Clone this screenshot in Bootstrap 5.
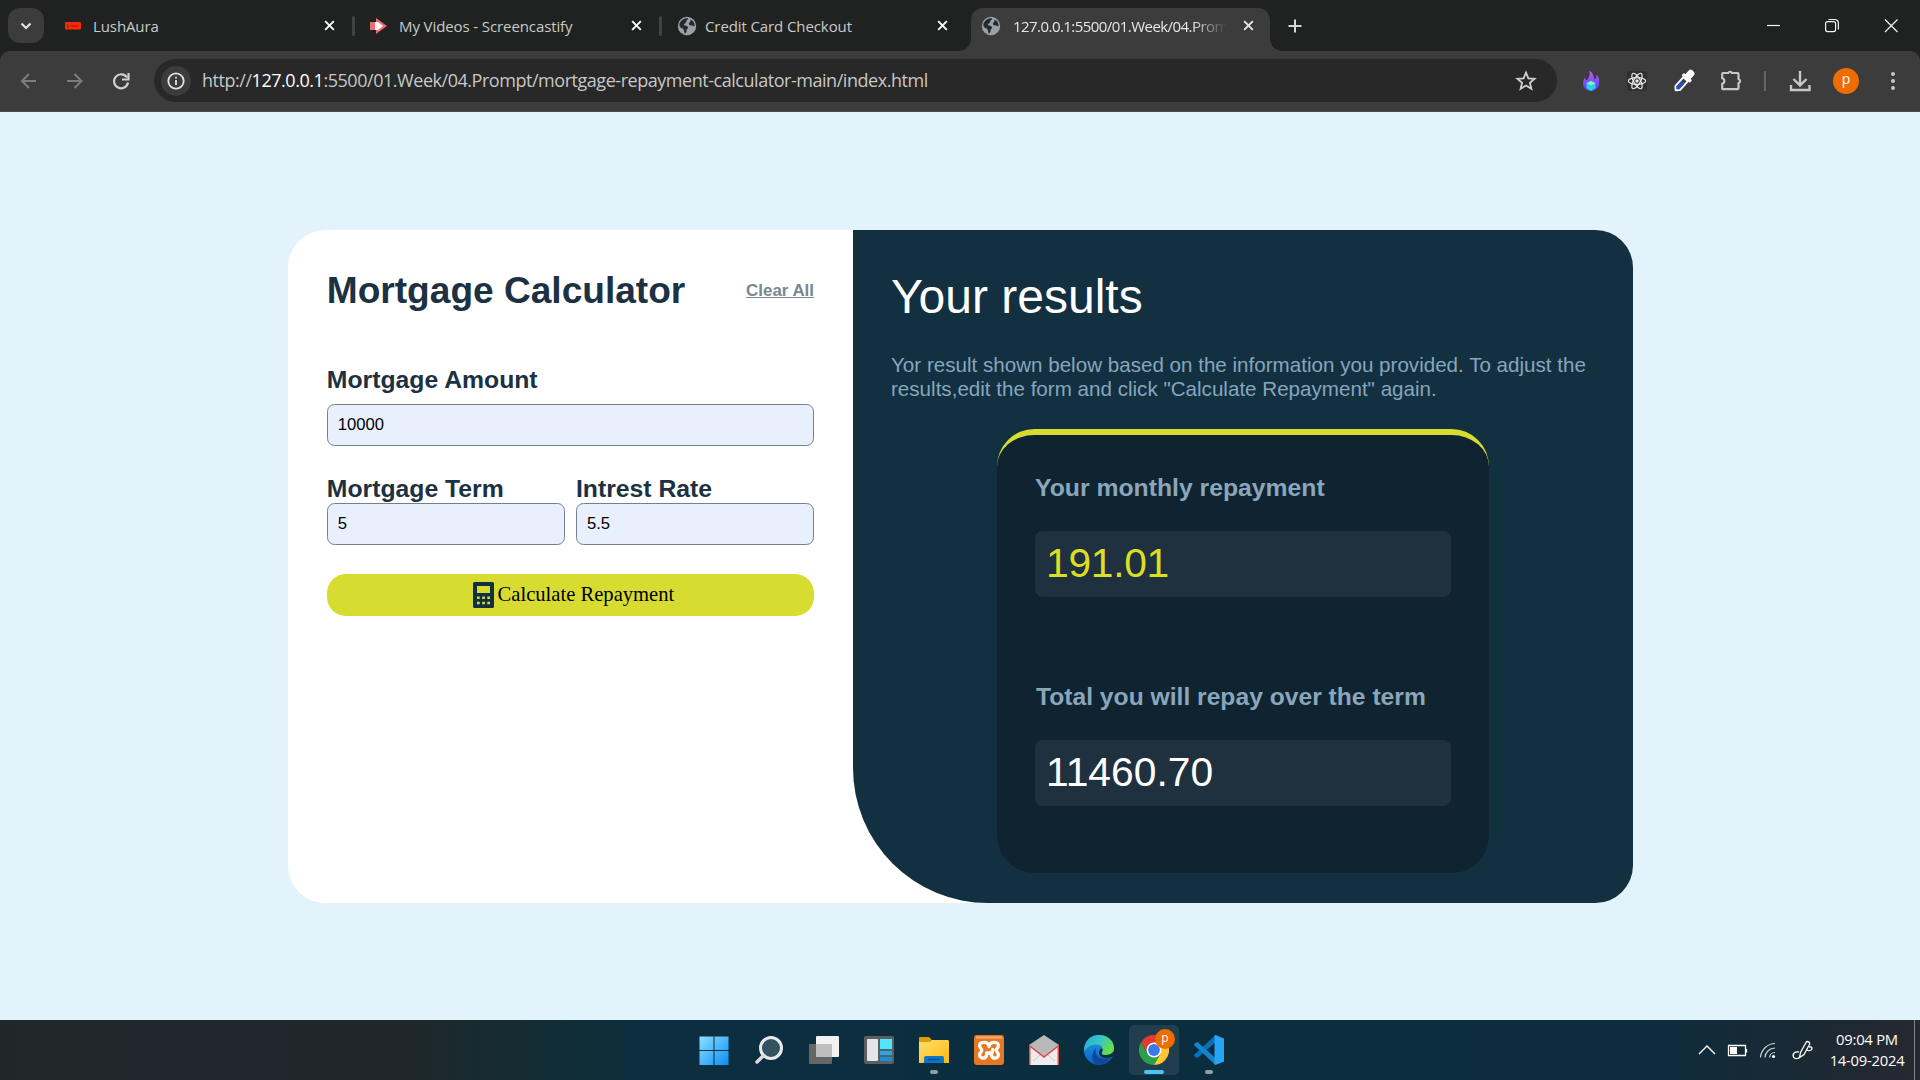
<!DOCTYPE html>
<html lang="en">
<head>
<meta charset="utf-8">
<title>Mortgage Calculator</title>
<link rel="stylesheet" href="https://cdn.jsdelivr.net/npm/bootstrap@5.3.0/dist/css/bootstrap.min.css">
<style>
  html, body { width: 1920px; height: 1080px; overflow: hidden; }
  body { font-family: "Liberation Sans", Arial, sans-serif; background: #e2f3fb; line-height: 1; }
  svg { display: block; flex: none; }
  .ui-font { font-family: "Open Sans", "Noto Sans", sans-serif; }

  /* tab strip */
  .tabstrip { height: 51px; background: #202221; color: #c9cac9; font-size: 15px; padding-left: 8px; }
  .tab-search { width: 36px; height: 35px; border-radius: 12px; background: #3c3c3c; }
  .tab-item { width: 304px; height: 35px; padding-left: 15px; }
  .tab-item.tab-last { width: 309px; }
  .tab-title { line-height: 24px; letter-spacing: -.1px; white-space: nowrap; }
  .tab-sep { width: 3px; height: 20px; border-radius: 2px; background: #414241; }
  .tab-live { width: 299px; height: 43px; margin-top: 8px; border-radius: 12px 12px 0 0; background: #3c3c3c; color: #e6e6e6; padding: 0 15px 8px 10px; position: relative; }
  .tab-live::before, .tab-live::after { content: ""; position: absolute; bottom: 0; width: 12px; height: 12px; }
  .tab-live::before { left: -12px; background: radial-gradient(circle at 0 0, transparent 11.5px, #3c3c3c 12px); }
  .tab-live::after { right: -12px; background: radial-gradient(circle at 100% 0, transparent 11.5px, #3c3c3c 12px); }
  .tab-fade { letter-spacing: -.55px; width: 218px; overflow: hidden; -webkit-mask-image: linear-gradient(90deg, #000 84%, transparent 100%); mask-image: linear-gradient(90deg, #000 84%, transparent 100%); }
  .tab-add { margin: 16px 0 0 15px; }
  .close-wide { margin-right: 22px; }

  /* address row */
  .toolbar-row { height: 61px; background: #3c3c3c; border-bottom: 1px solid #4a4a4a; padding: 0 16px 1px 16px; border-radius: 10px 10px 0 0; }
  .strip-under { background: #202221; }
  .omnibox { width: 1403px; height: 43px; border-radius: 22px; background: #282828; color: #c7c7c7; font-size: 18px; padding: 0 20px 0 7px; }
  .info-dot { width: 30px; height: 30px; background: #3c3c3c; }
  .url-text { letter-spacing: -.46px; margin-left: 11px; line-height: 26px; padding-bottom: 2px; white-space: nowrap; }
  .url-text span { color: #fff; }
  .avatar-dot { width: 26px; height: 26px; background: #ef6c00; color: #fff; font-size: 14px; }

  /* page */
  .stage { height: 908px; padding-top: 118px; }
  .calc { width: 1345px; height: 673px; border-radius: 37.5px; background: #fff; overflow: hidden; }
  .pane-form { width: 565px; padding: 39px 38.5px 0 39.3px; color: #1c3141; }
  .pane-result { width: 780px; background: #133041; border-bottom-left-radius: 135px; padding: 40px 38.5px 0; }
  .title-main { font-size: 37.1px; line-height: 42px; font-weight: 700; margin: 0; white-space: nowrap; }
  .clear-all { font-size: 16.9px; font-weight: 700; color: #7a8891; text-decoration: underline; white-space: nowrap; padding-top: 2px; }
  .group-amount { padding-top: 55px; }
  .group-amount .field-box { margin-top: 10px; }
  .group-pair { gap: 11px; padding-top: 28.5px; }
  .field-label { font-size: 24.75px; line-height: 28px; font-weight: 700; display: block; white-space: nowrap; }
  .field-box { height: 42px; border: 1.25px solid #74818b; border-radius: 7.5px; background: #e8f0fe; color: #000; font-size: 16.67px; padding: 0 10px; width: 100%; display: block; }
  .btn-calc { height: 42px; border-radius: 19px; background: #d9dc30; color: #000; font-family: "Liberation Serif", "Times New Roman", serif; font-size: 20.6px; width: 100%; padding: 0 0 1px 6px; border: 0; margin-top: 29.5px; }
  .result-title { font-size: 48px; line-height: 54px; font-weight: 400; color: #fff; margin: 0; }
  .result-note { font-size: 20.6px; line-height: 24px; color: #85a6bd; margin: 29px 0 28px; white-space: nowrap; }
  .result-card { width: 492px; height: 444px; margin-left: 106px; border-top: 6px solid #d9dc30; border-radius: 37.5px; background: #0f2430; padding: 38.5px 38px 0; color: #8aa6bc; }
  .result-value { height: 66px; border-radius: 7.5px; background: #1f303e; font-size: 40.8px; padding: 0 11px 2px; margin-top: 29.5px; }
  .label-total { margin: 85.5px 0 0 1px; font-size: 24.65px; }
  .lime { color: #dbde22; letter-spacing: -.3px; }

  /* taskbar */
  .taskbar { height: 60px; background: linear-gradient(90deg, #202827 0, #1f282d 8%, #1e282b 22%, #132d34 28%, #0c2e40 34%, #0b2e3f 60%, #0d2c3d 86%, #1c2933 95%, #282831 100%); position: relative; }
  .task-row { padding-left: 2px; }
  .task-slot { width: 55px; height: 60px; padding-top: 15px; position: relative; }
  .task-slot .run-dot { position: absolute; bottom: 6px; left: 50%; width: 8px; height: 4px; margin-left: -4px; border-radius: 2px; background: #91a0a8; }
  .task-slot .run-live { width: 20px; margin-left: -10px; background: #4cc2ff; }
  .task-active { position: absolute; inset: 5px 2px 5px 3px; border-radius: 5px; background: #213e4e; }
  .task-badge { position: absolute; width: 20px; height: 20px; left: 29px; top: 9px; background: #ef6c00; color: #fff; font-size: 12px; line-height: 17px; }
  .tray { position: absolute; right: 0; top: 0; height: 60px; color: #fff; }
  .clock { font-size: 14.8px; line-height: 21px; width: 79px; letter-spacing: -.25px; padding-left: 1px; white-space: nowrap; }
  .peek { width: 1px; height: 60px; background: #7e858b; margin: 0 5px 0 8px; }
</style>
<script src="https://cdn.jsdelivr.net/npm/bootstrap@5.3.0/dist/js/bootstrap.bundle.min.js"></script>
</head>
<body>
<svg width="0" height="0" class="position-absolute">
  <defs>
    <symbol id="x" viewBox="0 0 12 12"><path d="M2 2l8 8M10 2l-8 8" stroke="currentColor" stroke-width="1.800" fill="none"/></symbol>
    <symbol id="globe" viewBox="0 0 20 20"><circle cx="10" cy="10" r="9.2" fill="#9aa0a6"/><path d="M3 6.500C5 3 8.500 1.900 11 2.300C11.500 4 9 4.200 9.200 6C9.300 7.200 7 7 7 8.600C7 10 10.500 9.400 11 11.300C11.300 12.600 9.500 13 9.600 14.500C9.700 16 8.600 17.500 7.600 17.400C6.800 15 7.300 13.200 5.500 12.600C3.800 12 2.200 10.500 2.300 9C2.300 8 2.600 7.200 3 6.500Z" fill="#27292b"/><path d="M13.500 3.500C16 4.600 17.800 7.200 17.700 10C16.600 10.600 16 9.600 14.500 9.500C13 9.400 11.600 8.800 11.900 7.500C12.200 6.200 14 6.400 13.500 3.500Z" fill="#27292b"/></symbol>
  </defs>
</svg>

<header class="ui-font">
  <div class="tabstrip d-flex align-items-start">
    <div class="tab-search d-flex align-items-center justify-content-center mt-2">
      <svg width="12" height="8" viewBox="0 0 12 8"><path d="M1.500 1.500L6 6l4.500-4.500" stroke="#e3e3e3" stroke-width="2.200" fill="none"/></svg>
    </div>
    <div class="tab-item d-flex align-items-center mt-2 ms-1">
      <svg width="18" height="8" viewBox="-1 0 18 8"><rect x="1" width="16" height="7.500" rx="1" fill="#f52a05"/><path d="M3 3h2M7 4h7M3 5h2" stroke="#8a1a06" stroke-width="1"/></svg>
      <span class="tab-title flex-grow-1 ms-2 ps-1">LushAura</span>
      <svg class="text-light me-3" width="13" height="13"><use href="#x"/></svg>
    </div>
    <div class="tab-sep mt-3"></div>
    <div class="tab-item d-flex align-items-center mt-2">
      <svg width="17" height="18" viewBox="0 0 17 18"><path d="M0 5h6V1l11 8-11 8v-4H0z" fill="#ef6a6f"/><path d="M5 5h3l5 4-5 4H5z" fill="#fff"/></svg>
      <span class="tab-title flex-grow-1 ms-2 ps-1">My Videos - Screencastify</span>
      <svg class="text-light me-3" width="13" height="13"><use href="#x"/></svg>
    </div>
    <div class="tab-sep mt-3"></div>
    <div class="tab-item tab-last d-flex align-items-center mt-2">
      <svg width="20" height="20"><use href="#globe"/></svg>
      <span class="tab-title flex-grow-1 ms-2">Credit Card Checkout</span>
      <svg class="text-light close-wide" width="13" height="13"><use href="#x"/></svg>
    </div>
    <div class="tab-live d-flex align-items-center">
      <svg width="20" height="20"><use href="#globe"/></svg>
      <span class="tab-title tab-fade ms-2 ps-1">127.0.0.1:5500/01.Week/04.Prom</span>
      <svg class="ms-auto" width="13" height="13"><use href="#x"/></svg>
    </div>
    <svg class="tab-add" width="20" height="20" viewBox="0 0 20 20"><path d="M10 3.500v13M3.500 10h13" stroke="#d8d8d8" stroke-width="2"/></svg>
    <div class="d-flex ms-auto align-items-center h-100">
      <svg width="160" height="51" viewBox="1760 0 160 51" fill="none" stroke="#f4f4f4" stroke-width="1.200"><path d="M1767 25.500h13"/><rect x="1825.600" y="21.600" width="10" height="10" rx="2"/><path d="M1828.500 19.500h6.500a3.400 3.400 0 0 1 3.400 3.400v6.500"/><path d="M1885 19.500l12.500 12.500M1897.500 19.500L1885 32"/></svg>
    </div>
  </div>
  <div class="strip-under">
  <div class="toolbar-row d-flex align-items-center">
    <svg width="138" height="30" viewBox="16 66 138 30" fill="none" stroke-width="2"><path d="M36 81H22M29 74l-7 7 7 7" stroke="#7d7d7d"/><path d="M67 81h14M74.500 74l7 7-7 7" stroke="#7d7d7d"/><path d="M127 77.500A7 7 0 1 0 128 82.500" stroke="#d0d0d0" stroke-width="2.200"/><path d="M128.500 73v6.500H122" stroke="#d0d0d0" stroke-width="2.200"/></svg>
    <div class="omnibox d-flex align-items-center">
      <div class="info-dot rounded-circle d-flex align-items-center justify-content-center"><svg width="18" height="18" viewBox="0 0 18 18"><circle cx="9" cy="9" r="7.700" stroke="#e3e3e3" stroke-width="1.800" fill="none"/><path d="M9 8v5M9 4.700v1.900" stroke="#e3e3e3" stroke-width="1.800"/></svg></div>
      <div class="url-text">http://<span>127.0.0.1</span>:5500/01.Week/04.Prompt/mortgage-repayment-calculator-main/index.html</div>
      <svg class="ms-auto" width="22" height="22" viewBox="0 0 22 22"><path d="M11 2.600l2.400 5.700 6.200.5-4.700 4 1.500 6-5.400-3.300-5.400 3.300 1.500-6-4.700-4 6.200-.5z" fill="none" stroke="#d0d0d0" stroke-width="1.800"/></svg>
    </div>
    <svg width="272" height="42" viewBox="1557 60 272 42" fill="none">
      <defs><linearGradient id="fl" x1="0" y1="0" x2="0" y2="1"><stop offset="0" stop-color="#c15cf0"/><stop offset=".6" stop-color="#7a4bff"/><stop offset="1" stop-color="#5b3df0"/></linearGradient></defs>
      <path d="M1589.500 70.500c5 3 3.500 7 5.500 9 1.300-1 1.800-3 1.500-5 3 3 3 6.500 2.500 10-.6 4-4 6.500-8 6.500s-8-2.500-8-7.500c0-3 1-4.500 2-6 .3 1.800.8 2.500 1.800 3 2.200-2.500 3.400-5.500 2.700-10z" fill="url(#fl)"/>
      <path d="M1591 81l4.500 2.300v5L1591 91l-4.500-2.700v-5z" fill="#27d3e0"/><path d="M1586.500 83.300l4.500 2.200 4.500-2.200-4.500-2.300z" fill="#7cf3c8"/>
      <rect x="1627" y="71" width="20" height="20" rx="2" fill="#303030"/>
      <g stroke="#e8e8e8" stroke-width="1.200"><ellipse cx="1637" cy="81" rx="8.700" ry="3.300"/><ellipse cx="1637" cy="81" rx="8.700" ry="3.300" transform="rotate(60 1637 81)"/><ellipse cx="1637" cy="81" rx="8.700" ry="3.300" transform="rotate(120 1637 81)"/></g><circle cx="1637" cy="81" r="1.700" fill="#e8e8e8"/>
      <g transform="rotate(42 1684 81)"><path d="M1681 78.500h6v12l-3 3-3-3z" fill="#3c3c3c" stroke="#fff" stroke-width="2" stroke-linejoin="round"/><path d="M1682 82.500h4v7.500l-2 2-2-2z" fill="#2a4fc0"/><rect x="1678.500" y="75" width="11" height="3.600" rx="1" fill="#fff"/><rect x="1680.500" y="67.500" width="7" height="9" rx="2.800" fill="#fff"/></g>
      <path d="M1723 73h5.200a2 2 0 0 1 3.700 0h5.600a1 1 0 0 1 1 1v5a2.200 2.200 0 0 1 0 4.200v5a1 1 0 0 1-1 1h-14.500a.8.800 0 0 1-.8-.8v-4.600a2.900 2.900 0 0 0 0-5.600v-4.400a.8.800 0 0 1 .8-.8z" stroke="#c7c7c7" stroke-width="2.200"/>
      <path d="M1765 71v20" stroke="#666" stroke-width="2"/>
      <path d="M1800 71v14M1793.500 79l6.500 6.500 6.500-6.500M1791 85v5h18.500v-5" stroke="#c7c7c7" stroke-width="2.400"/>
    </svg>
    <div class="avatar-dot rounded-circle d-flex align-items-center justify-content-center ms-1 pb-1">p</div>
    <svg class="ms-auto" width="22" height="22" viewBox="0 0 22 22" fill="#c7c7c7"><circle cx="11" cy="4" r="2"/><circle cx="11" cy="11" r="2"/><circle cx="11" cy="18" r="2"/></svg>
  </div>
  </div>
</header>

<main class="stage">
  <div class="calc d-flex mx-auto">
    <section class="pane-form">
      <div class="d-flex justify-content-between align-items-center">
        <h1 class="title-main">Mortgage Calculator</h1>
        <a class="clear-all">Clear All</a>
      </div>
      <div class="group-amount">
        <label class="field-label" for="amt">Mortgage Amount</label>
        <input id="amt" class="field-box" value="10000">
      </div>
      <div class="group-pair d-flex">
        <div class="flex-fill"><label class="field-label" for="term">Mortgage Term</label><input id="term" class="field-box" value="5"></div>
        <div class="flex-fill"><label class="field-label" for="rate">Intrest Rate</label><input id="rate" class="field-box" value="5.5"></div>
      </div>
      <button class="btn-calc d-flex align-items-center justify-content-center">
        <svg width="21" height="26" viewBox="0 0 21 26"><path fill="#133041" fill-rule="evenodd" d="M1.500 0h18A1.500 1.500 0 0 1 21 1.500v23a1.500 1.500 0 0 1-1.500 1.500h-18A1.500 1.500 0 0 1 0 24.500v-23A1.500 1.500 0 0 1 1.500 0zM4 4v7h13V4z"/><path d="M4 15.800h2.700M9.200 15.800h2.700M14.300 15.800h2.700M4 21h2.700M9.200 21h2.700M14.300 21h2.700" stroke="#d9dc30" stroke-width="2.600"/></svg>
        <span class="ms-1">Calculate Repayment</span>
      </button>
    </section>
    <section class="pane-result">
      <h2 class="result-title">Your results</h2>
      <p class="result-note">Yor result shown below based on the information you provided. To adjust the<br>results,edit the form and click "Calculate Repayment" again.</p>
      <div class="result-card">
        <div class="field-label">Your monthly repayment</div>
        <div class="result-value lime d-flex align-items-center">191.01</div>
        <div class="field-label label-total">Total you will repay over the term</div>
        <div class="result-value text-white d-flex align-items-center">11460.70</div>
      </div>
    </section>
  </div>
</main>

<footer class="taskbar d-flex justify-content-center ui-font">
  <div class="task-row d-flex">
    <div class="task-slot d-flex justify-content-center"><svg width="30" height="30" viewBox="0 0 30 30"><defs><linearGradient id="w" x1="0" y1="0" x2="1" y2="1"><stop offset="0" stop-color="#8be0ff"/><stop offset="1" stop-color="#0a8df5"/></linearGradient></defs><path d="M.500 1.500h14V15H.500zM15.500 1.500h14V15h-14zM.500 16h14v14H.500zM15.500 16h14v14h-14z" fill="url(#w)"/></svg></div>
    <div class="task-slot d-flex justify-content-center"><svg width="30" height="30" viewBox="0 0 30 30"><circle cx="17" cy="13" r="10.500" fill="#33515f" stroke="#e8ebec" stroke-width="3"/><path d="M9.500 20.500L3 27" stroke="#d9dddf" stroke-width="3.500" stroke-linecap="round"/></svg></div>
    <div class="task-slot d-flex justify-content-center"><svg width="30" height="30" viewBox="0 0 30 30"><rect y="9" width="23" height="20" rx="1" fill="#666"/><rect x="7" y="1" width="23" height="21" rx="1" fill="#f1f1f1"/><path d="M7 9h16v13H7z" fill="#bebebe"/></svg></div>
    <div class="task-slot d-flex justify-content-center"><svg width="30" height="30" viewBox="0 0 30 30"><rect y="1" width="30" height="28" rx="2" fill="#5c5f62"/><rect x="3" y="4" width="11" height="22" rx="1" fill="#e3e5e8"/><rect x="16" y="4" width="12" height="10" fill="#50e6ff"/><rect x="16" y="16" width="12" height="4" fill="#28a8ea"/><rect x="16" y="22" width="12" height="4" fill="#1490df"/></svg></div>
    <div class="task-slot d-flex justify-content-center"><svg width="30" height="30" viewBox="0 0 30 30"><defs><linearGradient id="fo" x1="0" y1="0" x2="1" y2="1"><stop offset="0" stop-color="#ffdf70"/><stop offset="1" stop-color="#ffb90f"/></linearGradient></defs><path d="M0 3a1 1 0 0 1 1-1h9l3 3h15a2 2 0 0 1 2 2v5H0z" fill="#e09b08"/><path d="M0 7h11l2-2h15.500A1.500 1.500 0 0 1 30 6.500V28H0z" fill="url(#fo)"/><path d="M5 28v-5a2 2 0 0 1 2-2h16a2 2 0 0 1 2 2v5z" fill="#0d76c4"/><path d="M9 24.500h12" stroke="#064a84" stroke-width="1.300"/></svg><i class="run-dot"></i></div>
    <div class="task-slot d-flex justify-content-center"><svg width="30" height="30" viewBox="0 0 30 30"><rect width="30" height="30" rx="3" fill="#e87722"/><path d="M2 1.500h26v2H2z" fill="#f6ae78"/><path d="M15 11.500C14.500 8 12.500 7.300 10 7.300C6.500 7.300 5.200 9 5.700 11.300C6 13 7.800 14 7.800 15.200C7.800 16.500 5.800 17.500 5.700 19.500C5.500 22 7.300 23.400 9.700 23.200C12.300 23 12.500 20.500 13 18.300M15 11.500C15.500 8 17.500 7.300 20 7.300C23.500 7.300 24.800 9 24.300 11.300C24 13 22.200 14 22.200 15.200C22.200 16.500 24.200 17.500 24.300 19.500C24.500 22 22.700 23.400 20.300 23.200C17.700 23 17.500 20.500 17 18.300M12.500 18h5.500l.8-3.500" fill="none" stroke="#fff" stroke-width="3.300" stroke-linejoin="round" stroke-linecap="round"/></svg></div>
    <div class="task-slot d-flex justify-content-center"><svg width="30" height="30" viewBox="0 0 30 30"><path d="M0 10L15 0l15 10v20H0z" fill="#b9b9b9"/><path d="M0 10l15 12 15-12v20H0z" fill="#ededed"/><path d="M.700 30V11L15 22l14.300-11v19" fill="none" stroke="#e04848" stroke-width="1.500"/><path d="M4 26l7-6M26 26l-7-6" stroke="#c9c9c9"/></svg></div>
    <div class="task-slot d-flex justify-content-center"><svg width="30" height="30" viewBox="0 0 30 30"><defs><linearGradient id="e1" x1="0" y1="0" x2="1" y2=".5"><stop offset="0" stop-color="#25a7dc"/><stop offset=".5" stop-color="#36c4c8"/><stop offset="1" stop-color="#66e04a"/></linearGradient><linearGradient id="e2" x1="0" y1="0" x2="0" y2="1"><stop offset="0" stop-color="#1f9de0"/><stop offset="1" stop-color="#0b62c8"/></linearGradient></defs><circle cx="15" cy="15" r="15" fill="url(#e2)"/><path d="M12 13c-2 8 4 13 15 9.500C24.500 27 20 30 15 30 7 29 6 19 12 13z" fill="#10479b"/><path d="M.300 12C2 4 8 0 15 0c9 0 15 6 15 13 0 5-4 7-8 7-4 0-5-1.500-4-3 2-3 0-7.500-5-7.500C7 9.500 2 12 .300 17z" fill="url(#e1)"/><path d="M18 17c-1.500 2 1 3.300 4 3 3.500-.2 6-1.500 8-3.500.3 2.500-.5 4.300-2.500 5.800-5 1.500-12 1.200-12.500-4.800 0-2 1-4 3-4 .8 1 .8 2 0 3.500z" fill="#0c2e3e"/></svg></div>
    <div class="task-slot d-flex justify-content-center"><i class="task-active"></i><svg class="position-relative" width="30" height="30" viewBox="0 0 30 30"><path d="M2 7.500A15 15 0 0 1 28 7.500H15L8.500 18.500z" fill="#e33b2e"/><path d="M2 7.500A15 15 0 0 0 15 30l6.500-11.300H8.500z" fill="#2c9f4b"/><path d="M28 7.500A15 15 0 0 1 15 30l6.500-11.300L15 7.500z" fill="#fcc934"/><circle cx="15" cy="15" r="7.500" fill="#fff"/><circle cx="15" cy="15" r="5.900" fill="#3a78ee"/></svg><span class="task-badge rounded-circle text-center">p</span><i class="run-dot run-live"></i></div>
    <div class="task-slot d-flex justify-content-center"><svg width="30" height="30" viewBox="0 0 30 30"><path d="M21 7.500L3.200 23.200.500 21.300c-.7-.5-.6-1.300 0-1.900L21 .500z" fill="#0a70b8"/><path d="M21 22.500L3.200 6.800.500 8.700c-.7.500-.6 1.300 0 1.900L21 29.500z" fill="#1384cf"/><path d="M21.500 0L30 3.500v23L21.500 30c-.7-.3-1-.7-1-1.500v-27c0-.8.300-1.200 1-1.500z" fill="#27a5f2"/></svg><i class="run-dot"></i></div>
  </div>
  <div class="tray d-flex align-items-center">
    <svg width="132" height="60" viewBox="1695 1020 132 60" fill="none" stroke="#fff"><path d="M1699 1054l8-8 8 8" stroke-width="1.400"/><path d="M1728.500 1045.500h17v10h-17zM1746.500 1049v3.500" stroke-width="1.300"/><path d="M1730 1047h7v7h-7z" fill="#fff" stroke="none"/><path d="M1760.500 1057.500a15 15 0 0 1 14.500-14M1765 1057.500a10 10 0 0 1 10-9.500M1769.500 1057.500a5.500 5.500 0 0 1 5.500-5" stroke-width="1.200" stroke="#ccd3d8"/><circle cx="1773.500" cy="1056.500" r="1.600" fill="#fff" stroke="none"/><path d="M1799.500 1057.500l1-5 5.500-10c1.500-2 4.500-.5 3.500 2l-5.500 10zM1799 1052c-4-1-7 2-5.500 5 1.200 2.500 4.500 1.500 6 .5M1809 1047c3-.8 4 1.500 2 3-1.500 1-3.500.5-4 0" stroke-width="1.300"/></svg>
    <div class="clock text-center">09:04 PM<br>14-09-2024</div>
    <div class="peek"></div>
  </div>
</footer>
</body>
</html>
